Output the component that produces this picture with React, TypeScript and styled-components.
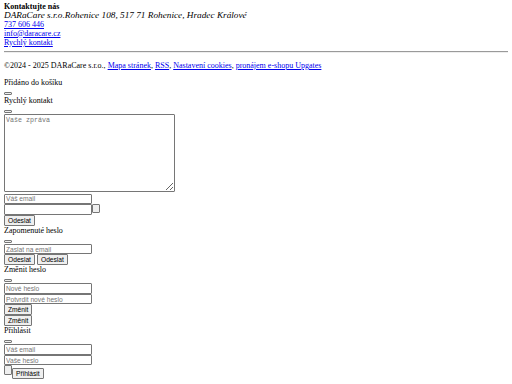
import styled, { createGlobalStyle } from "styled-components";

const Global = createGlobalStyle`
  html, body { margin: 0; padding: 0; background: #fff; }
  body { font-family: "Liberation Serif", "Times New Roman", serif; color: #000; }
`;

// an unstyled document, shown at half scale
const Page = styled.div`
  zoom: 0.5;
  padding: 3px 8px 8px;
  font-size: 16px;
  a { color: #0000ee; }
`;

const Contact = styled.div`
  display: flex;
  flex-direction: column;
  align-items: flex-start;
`;

const Address = styled.address`
  font-style: italic;
  font-size: 18.5px;
  line-height: 18.4px;
`;

const Rule = styled.hr`
  margin: 8px 0;
  border: none;
  border-top: 1px solid #9a9a9a;
  border-bottom: 1px solid #eee;
`;

const Para = styled.p<{ $last?: boolean }>`
  margin: 16px 0 ${(p) => (p.$last ? "0" : "16px")};
`;

const Close = styled.button`
  display: inline-block;
  width: 16px;
  height: 6px;
  padding: 0;
  margin: 0;
  vertical-align: baseline;
  border: 1px solid #767676;
  border-radius: 2px;
  background: #efefef;
`;

const Area = styled.textarea`
  width: 342px;
  height: 156px;
  margin: 0;
  font-family: "Liberation Mono", "Courier New", monospace;
  font-size: 13.33px;
  border: 1px solid #767676;
  border-radius: 2px;
  padding: 2px;
  box-sizing: border-box;
`;

const Field = styled.input`
  width: 176px;
  height: 21px;
  box-sizing: border-box;
  margin: 0;
  padding: 1px 2px;
  font-family: "Liberation Sans", Arial, sans-serif;
  font-size: 13.33px;
  border: 1px solid #767676;
  border-radius: 2px;
  &::placeholder { color: #757575; }
`;

const Btn = styled.button`
  margin: 0;
  padding: 2px 6px;
  font-family: "Liberation Sans", Arial, sans-serif;
  font-size: 13.33px;
  color: #000;
  background: #efefef;
  border: 1px solid #767676;
  border-radius: 2px;
`;

const Blank = styled(Btn)<{ $h: number; $lift?: number }>`
  width: 16px;
  height: ${(p) => p.$h}px;
  padding: 0;
  vertical-align: ${(p) => p.$lift ?? 0}px;
`;

export default function App() {
  return (
    <>
      <Global />
      <Page>
        <Contact>
          <strong>Kontaktujte nás</strong>
          <Address>DARaCare s.r.o.Rohenice 108, 517 71 Rohenice, Hradec Králové</Address>
          <a href="#">737 606 446</a>
          <a href="#">info@daracare.cz</a>
          <a href="#">Rychlý kontakt</a>
        </Contact>
        <Rule />
        <Para>
          ©2024 - 2025 DARaCare s.r.o., <a href="#">Mapa stránek</a>, <a href="#">RSS</a>,{" "}
          <a href="#">Nastavení cookies</a>, <a href="#">pronájem e-shopu Upgates</a>
        </Para>
        <Para $last>Přidáno do košíku</Para>
        <Close />
        <br />
        Rychlý kontakt
        <br />
        <Close />
        <br />
        <Area placeholder="Vaše zpráva" />
        <br />
        <Field placeholder="Váš email" />
        <br />
        <Field />
        <Blank $h={18} />
        <br />
        <Btn>Odeslat</Btn>
        <br />
        Zapomenuté heslo
        <br />
        <Close />
        <br />
        <Field placeholder="Zaslat na email" />
        <br />
        <Btn>Odeslat</Btn> <Btn>Odeslat</Btn>
        <br />
        Změnit heslo
        <br />
        <Close />
        <br />
        <Field placeholder="Nové heslo" />
        <br />
        <Field placeholder="Potvrdit nové heslo" />
        <br />
        <Btn>Změnit</Btn>
        <br />
        <Btn>Změnit</Btn>
        <br />
        Přihlásit
        <br />
        <Close />
        <br />
        <Field placeholder="Váš email" />
        <br />
        <Field placeholder="Vaše heslo" />
        <br />
        <Blank $h={20} $lift={4} />
        <Btn>Přihlásit</Btn>
      </Page>
    </>
  );
}
